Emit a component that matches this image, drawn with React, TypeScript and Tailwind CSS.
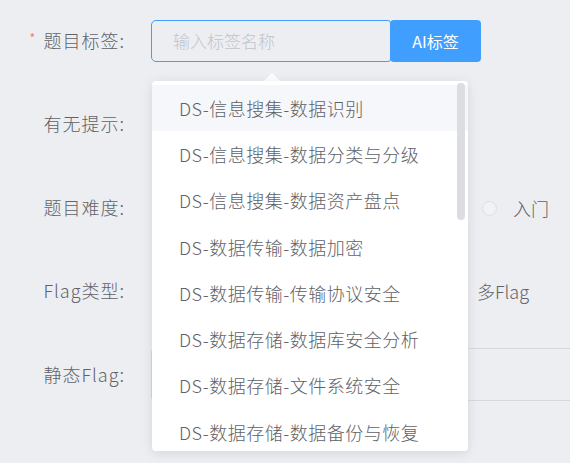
import React from "react";

const items = [
  "DS-信息搜集-数据识别",
  "DS-信息搜集-数据分类与分级",
  "DS-信息搜集-数据资产盘点",
  "DS-数据传输-数据加密",
  "DS-数据传输-传输协议安全",
  "DS-数据存储-数据库安全分析",
  "DS-数据存储-文件系统安全",
  "DS-数据存储-数据备份与恢复",
];

function Label({ text, required }: { text: string; required?: boolean }) {
  return (
    <div className="relative -top-[1px] w-[125px] shrink-0 text-right text-[18px] font-light tracking-[1px] text-[#606266] leading-none">
      {required && <span className="text-[#f56c6c] text-[14px] mr-[7px] relative -top-[4px]">*</span>}
      {text}
    </div>
  );
}

export default function App() {
  return (
    <div
      className="relative w-[570px] h-[463px] overflow-hidden bg-[#edeef2]"
      style={{ fontFamily: '"Noto Sans CJK SC", "Noto Sans", sans-serif' }}
    >
      <div className="flex flex-col pt-[20px]">
        {/* Row 1 */}
        <div className="flex items-center h-[42px] gap-[26px]">
          <Label text="题目标签:" required />
          <div className="flex items-center h-[42px]">
            <div className="w-[240px] h-[42px] rounded-l-[5px] rounded-r-[3px] border border-[#409eff] flex items-center pl-[21px] text-[17px] font-light text-[#c0c4cc]">
              输入标签名称
            </div>
            <button className="-ml-[1px] h-[42px] w-[91px] -mt-[1px] rounded-[4px] bg-[#409eff] text-white text-[16px] flex items-center justify-center">
              AI标签
            </button>
          </div>
        </div>
        {/* Row 2 */}
        <div className="flex items-center h-[42px] gap-[26px] mt-[41px]">
          <Label text="有无提示:" />
        </div>
        {/* Row 3 */}
        <div className="flex items-center h-[42px] gap-[26px] mt-[42px]">
          <Label text="题目难度:" />
          <div className="flex items-center pl-[331px]">
            <span className="w-[15px] h-[15px] rounded-full border border-[#dcdfe6] bg-[#f1f2f5]" />
            <span className="ml-[16px] text-[18px] font-light text-[#606266]">入门</span>
          </div>
        </div>
        {/* Row 4 */}
        <div className="flex items-center h-[42px] gap-[26px] mt-[41px]">
          <Label text="Flag类型:" />
          <div className="flex items-center pl-[326px] text-[18px] font-light text-[#606266]">多Flag</div>
        </div>
        {/* Row 5 */}
        <div className="flex items-center h-[53px] gap-[26px] mt-[36px]">
          <Label text="静态Flag:" />
          <div className="w-[500px] h-[53px] shrink-0 border border-[#d6d8de] rounded-[4px]" />
        </div>
      </div>

      {/* Dropdown */}
      <div className="absolute left-[264px] top-[73px] w-0 h-0 border-l-[8px] border-r-[8px] border-b-[8px] border-l-transparent border-r-transparent border-b-white" />
      <div className="absolute left-[152px] top-[81px] w-[316px] h-[370px] bg-white rounded-[4px] shadow-[0_2px_12px_rgba(0,0,0,0.1)] overflow-hidden">
        <div className="pt-[4px]">
          {items.map((t, i) => (
            <div
              key={t}
              className={`h-[46.3px] flex items-center pl-[27px] text-[18px] font-light tracking-[0.5px] text-[#606266] ${i === 0 ? "bg-[#f5f7fa]" : ""}`}
            >
              {t}
            </div>
          ))}
        </div>
        <div className="absolute right-[3px] top-[2px] w-[8px] h-[137px] rounded-full bg-[#dcdde0]" />
      </div>
    </div>
  );
}
